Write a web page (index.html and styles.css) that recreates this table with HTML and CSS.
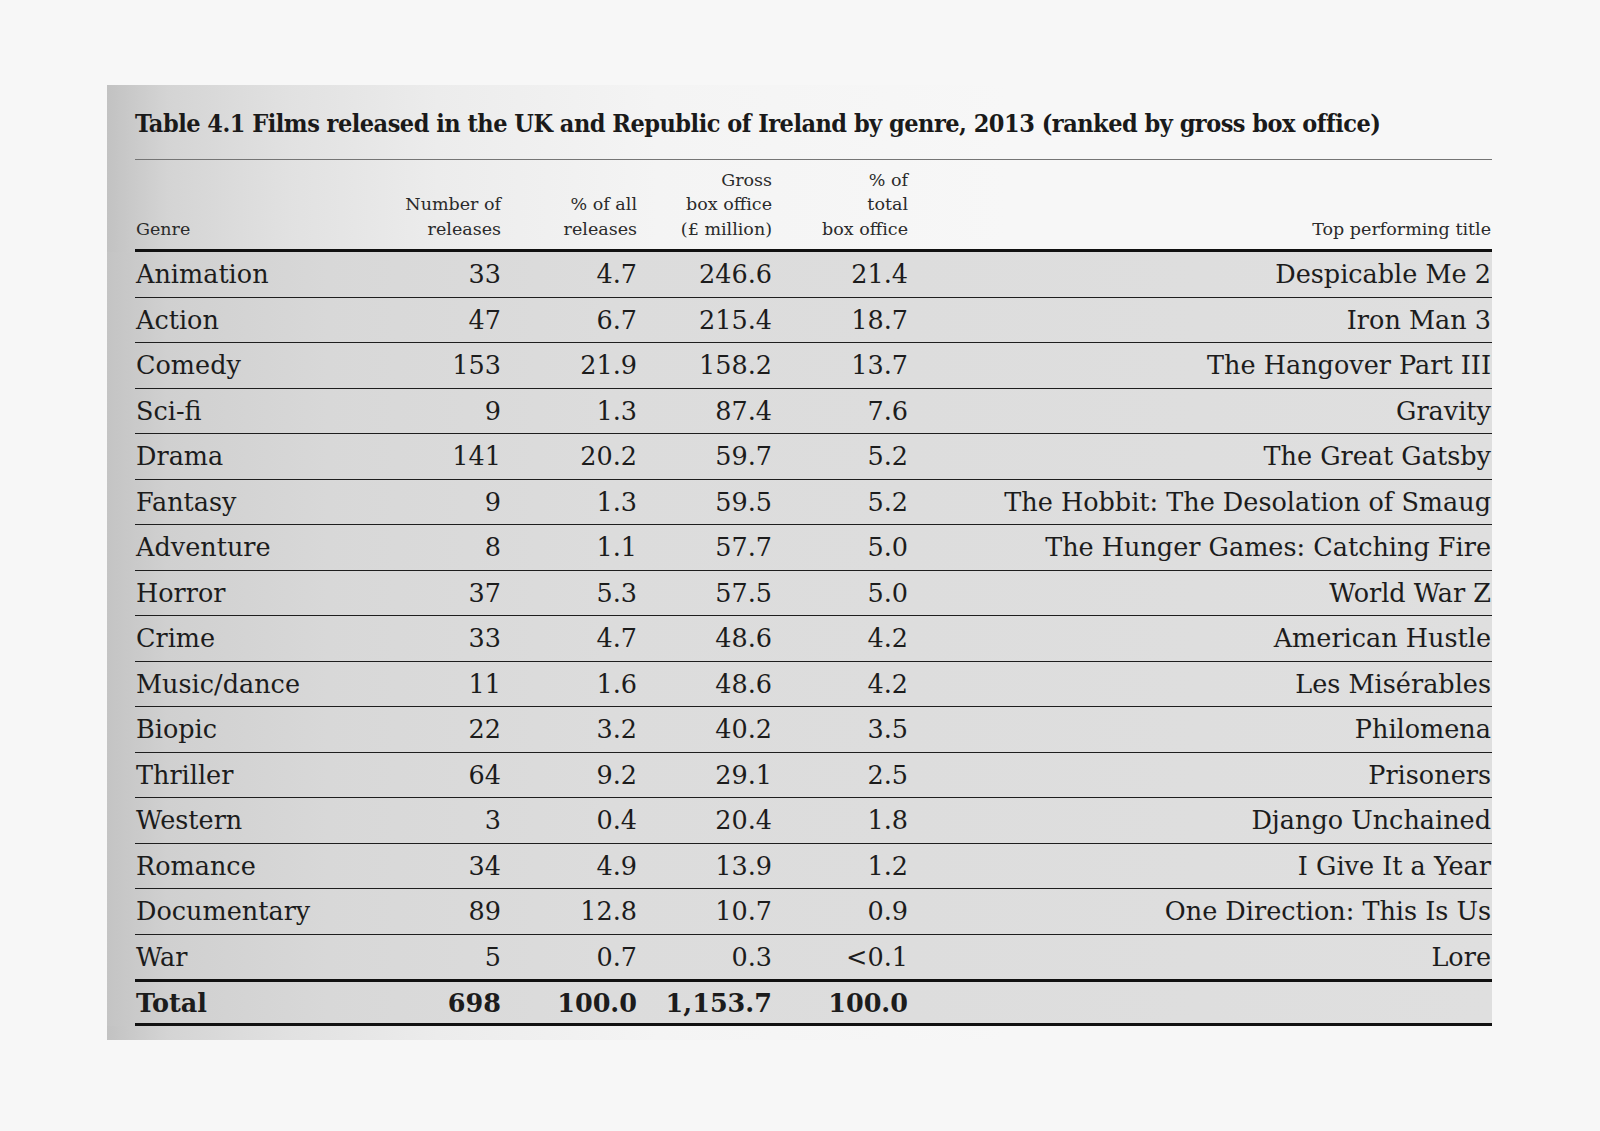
FILE: index.html
```html
<!DOCTYPE html>
<html lang="en">
<head>
<meta charset="utf-8">
<title>Table 4.1 Films released in the UK and Republic of Ireland by genre, 2013</title>
<link rel="stylesheet" href="styles.css">
</head>
<body>
<div class="panel">
  <div class="head">
    <h1 class="title">Table 4.1 Films released in the UK and Republic of Ireland by genre, 2013 (ranked by gross box office)</h1>
    <div class="rule"></div>
    <div class="colhead">
      <div class="c1">Genre</div>
      <div class="num">Number of<br>releases</div>
      <div class="num">% of all<br>releases</div>
      <div class="num">Gross<br>box office<br>(£ million)</div>
      <div class="num">% of<br>total<br>box office</div>
      <div class="num">Top performing title</div>
    </div>
  </div>
  <div class="body">
    <div class="row"><div class="c1">Animation</div><div class="num">33</div><div class="num">4.7</div><div class="num">246.6</div><div class="num">21.4</div><div class="num">Despicable Me 2</div></div>
    <div class="row"><div class="c1">Action</div><div class="num">47</div><div class="num">6.7</div><div class="num">215.4</div><div class="num">18.7</div><div class="num">Iron Man 3</div></div>
    <div class="row"><div class="c1">Comedy</div><div class="num">153</div><div class="num">21.9</div><div class="num">158.2</div><div class="num">13.7</div><div class="num">The Hangover Part III</div></div>
    <div class="row"><div class="c1">Sci-fi</div><div class="num">9</div><div class="num">1.3</div><div class="num">87.4</div><div class="num">7.6</div><div class="num">Gravity</div></div>
    <div class="row"><div class="c1">Drama</div><div class="num">141</div><div class="num">20.2</div><div class="num">59.7</div><div class="num">5.2</div><div class="num">The Great Gatsby</div></div>
    <div class="row"><div class="c1">Fantasy</div><div class="num">9</div><div class="num">1.3</div><div class="num">59.5</div><div class="num">5.2</div><div class="num">The Hobbit: The Desolation of Smaug</div></div>
    <div class="row"><div class="c1">Adventure</div><div class="num">8</div><div class="num">1.1</div><div class="num">57.7</div><div class="num">5.0</div><div class="num">The Hunger Games: Catching Fire</div></div>
    <div class="row"><div class="c1">Horror</div><div class="num">37</div><div class="num">5.3</div><div class="num">57.5</div><div class="num">5.0</div><div class="num">World War Z</div></div>
    <div class="row"><div class="c1">Crime</div><div class="num">33</div><div class="num">4.7</div><div class="num">48.6</div><div class="num">4.2</div><div class="num">American Hustle</div></div>
    <div class="row"><div class="c1">Music/dance</div><div class="num">11</div><div class="num">1.6</div><div class="num">48.6</div><div class="num">4.2</div><div class="num">Les Misérables</div></div>
    <div class="row"><div class="c1">Biopic</div><div class="num">22</div><div class="num">3.2</div><div class="num">40.2</div><div class="num">3.5</div><div class="num">Philomena</div></div>
    <div class="row"><div class="c1">Thriller</div><div class="num">64</div><div class="num">9.2</div><div class="num">29.1</div><div class="num">2.5</div><div class="num">Prisoners</div></div>
    <div class="row"><div class="c1">Western</div><div class="num">3</div><div class="num">0.4</div><div class="num">20.4</div><div class="num">1.8</div><div class="num">Django Unchained</div></div>
    <div class="row"><div class="c1">Romance</div><div class="num">34</div><div class="num">4.9</div><div class="num">13.9</div><div class="num">1.2</div><div class="num">I Give It a Year</div></div>
    <div class="row"><div class="c1">Documentary</div><div class="num">89</div><div class="num">12.8</div><div class="num">10.7</div><div class="num">0.9</div><div class="num">One Direction: This Is Us</div></div>
    <div class="row last"><div class="c1">War</div><div class="num">5</div><div class="num">0.7</div><div class="num">0.3</div><div class="num">&lt;0.1</div><div class="num">Lore</div></div>
    <div class="row total"><div class="c1">Total</div><div class="num">698</div><div class="num">100.0</div><div class="num">1,153.7</div><div class="num">100.0</div><div class="num"></div></div>
  </div>
  <div class="foot"></div>
</div>
</body>
</html>
```

FILE: styles.css
```css
html, body {
  margin: 0;
  padding: 0;
  background: #f7f7f7;
}
body {
  font-family: "DejaVu Serif", serif;
  color: #1c1c1c;
}
.panel {
  margin: 85px 0 0 107px;
  width: 1385px;
  background: linear-gradient(to right, #c2c2c2 0px, #d4d4d4 60px, #e1e1e1 180px, #ececec 330px, #f4f4f4 550px, #f7f7f7 900px, #f7f7f7 100%);
}
.head {
  padding: 22.6px 0 0 28px;
}
.title {
  margin: 0;
  font-family: "DejaVu Serif Condensed", "DejaVu Serif", serif;
  font-stretch: condensed;
  font-size: 25px;
  letter-spacing: -0.5px;
  line-height: 32px;
  font-weight: bold;
  white-space: nowrap;
  color: #1a1a1a;
}
.rule {
  margin-top: 19.5px;
  height: 1px;
  background: #757575;
}
.colhead, .row {
  display: grid;
  grid-template-columns: 245px 121px 136px 135px 136px 583px;
}
.colhead {
  height: 81px;
  padding-bottom: 8px;
  border-bottom: 3px solid #111;
  align-items: end;
  font-size: 17.5px;
  line-height: 24.5px;
  color: #2a2a2a;
}
.c1 {
  padding-left: 1px;
}
.num {
  text-align: right;
  white-space: nowrap;
}
.body {
  padding-left: 28px;
  background: linear-gradient(to right, #c4c4c4 0px, #d0d0d0 60px, #d8d8d8 220px, #dcdcdc 500px, #dfdfdf 100%);
}
.row {
  height: 43.5px;
  padding-top: 1px;
  box-sizing: content-box;
  font-size: 25.5px;
  line-height: 43.5px;
  border-bottom: 1px solid #1e1e1e;
  color: #1c1c1c;
}
.row > div {
  height: 43.5px;
}
.row.last {
  border-bottom: 3px solid #111;
}
.row.total {
  height: 39.5px;
  padding-top: 1.5px;
  line-height: 39.5px;
  font-weight: bold;
  border-bottom: 3px solid #111;
}
.row.total > div {
  height: 39.5px;
}
.foot {
  height: 14px;
}
```
